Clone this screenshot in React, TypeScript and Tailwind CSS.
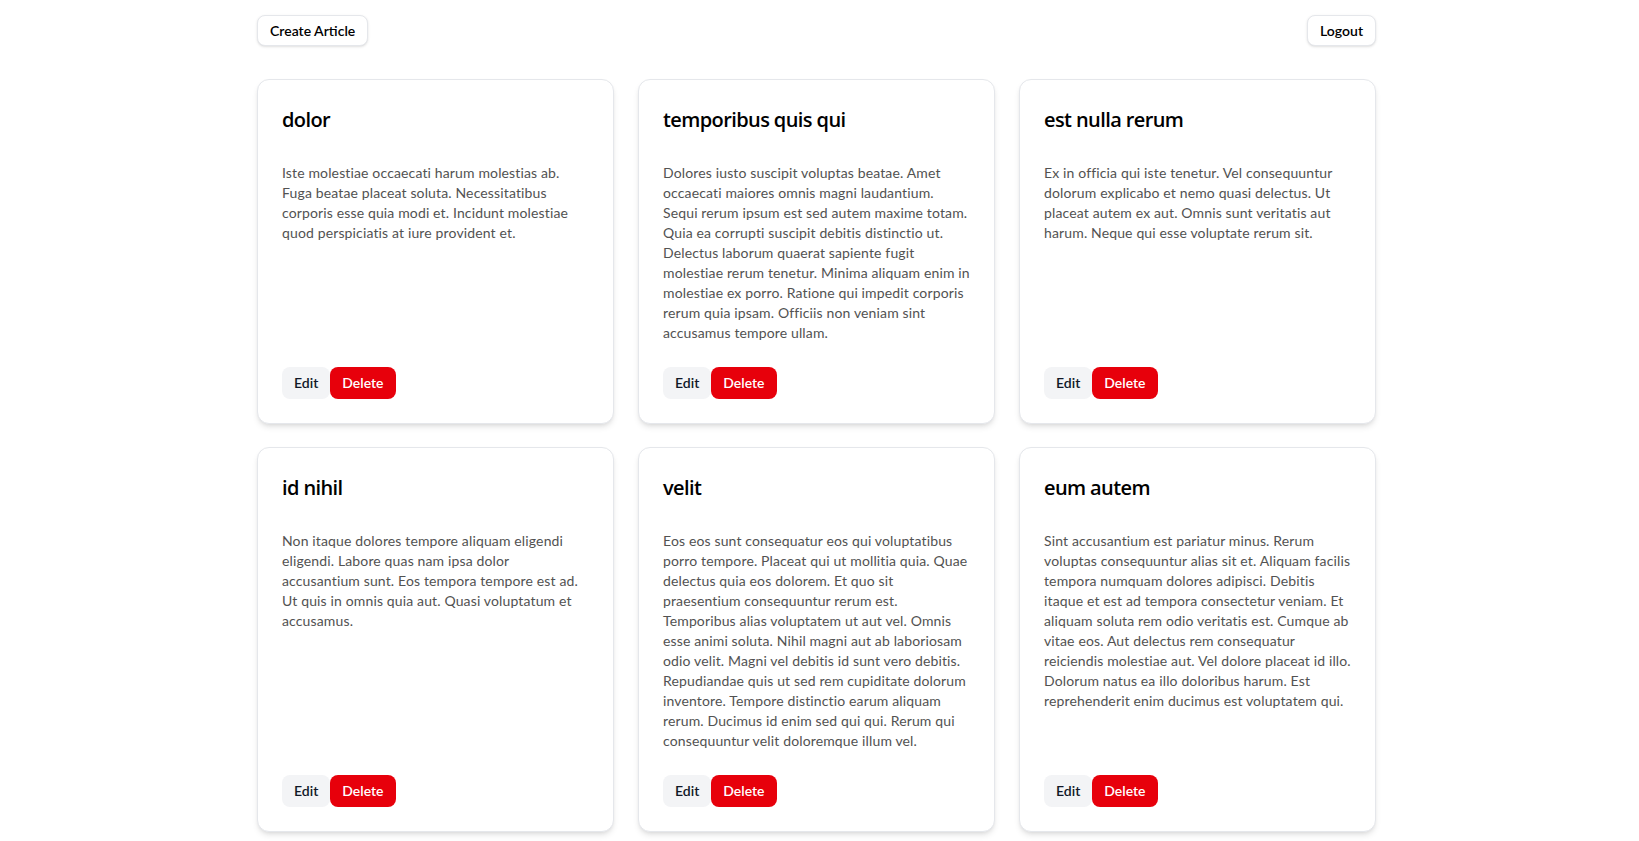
const articles = [
  {
    title: "dolor",
    body: "Iste molestiae occaecati harum molestias ab. Fuga beatae placeat soluta. Necessitatibus corporis esse quia modi et. Incidunt molestiae quod perspiciatis at iure provident et.",
  },
  {
    title: "temporibus quis qui",
    body: "Dolores iusto suscipit voluptas beatae. Amet occaecati maiores omnis magni laudantium. Sequi rerum ipsum est sed autem maxime totam. Quia ea corrupti suscipit debitis distinctio ut. Delectus laborum quaerat sapiente fugit molestiae rerum tenetur. Minima aliquam enim in molestiae ex porro. Ratione qui impedit corporis rerum quia ipsam. Officiis non veniam sint accusamus tempore ullam.",
  },
  {
    title: "est nulla rerum",
    body: "Ex in officia qui iste tenetur. Vel consequuntur dolorum explicabo et nemo quasi delectus. Ut placeat autem ex aut. Omnis sunt veritatis aut harum. Neque qui esse voluptate rerum sit.",
  },
  {
    title: "id nihil",
    body: "Non itaque dolores tempore aliquam eligendi eligendi. Labore quas nam ipsa dolor accusantium sunt. Eos tempora tempore est ad. Ut quis in omnis quia aut. Quasi voluptatum et accusamus.",
  },
  {
    title: "velit",
    body: "Eos eos sunt consequatur eos qui voluptatibus porro tempore. Placeat qui ut mollitia quia. Quae delectus quia eos dolorem. Et quo sit praesentium consequuntur rerum est. Temporibus alias voluptatem ut aut vel. Omnis esse animi soluta. Nihil magni aut ab laboriosam odio velit. Magni vel debitis id sunt vero debitis. Repudiandae quis ut sed rem cupiditate dolorum inventore. Tempore distinctio earum aliquam rerum. Ducimus id enim sed qui qui. Rerum qui consequuntur velit doloremque illum vel.",
  },
  {
    title: "eum autem",
    body: "Sint accusantium est pariatur minus. Rerum voluptas consequuntur alias sit et. Aliquam facilis tempora numquam dolores adipisci. Debitis itaque et est ad tempora consectetur veniam. Et aliquam soluta rem odio veritatis est. Cumque ab vitae eos. Aut delectus rem consequatur reiciendis molestiae aut. Vel dolore placeat id illo. Dolorum natus ea illo doloribus harum. Est reprehenderit enim ducimus est voluptatem qui.",
  },
];

const ArticleCard = ({ title, body }: { title: string; body: string }) => {
  return (
    <div className="flex flex-col rounded-xl border border-gray-200 bg-white px-6 pt-[26px] pb-6 shadow-md">
      <h2 className="mb-[29px] font-['Open_Sans',sans-serif] text-xl leading-7 font-semibold tracking-[-0.03em] text-black">
        {title}
      </h2>
      <p className="flex-1 text-sm leading-5 tracking-[0.14px] text-neutral-600">{body}</p>
      <div className="mt-6 flex">
        <button className="h-8 rounded-lg bg-gray-100 px-3 text-sm font-semibold text-gray-900">
          Edit
        </button>
        <button className="h-8 rounded-lg bg-red-600 px-3 text-sm font-semibold text-white">
          Delete
        </button>
      </div>
    </div>
  );
};

export default function App() {
  return (
    <div className="min-h-screen bg-white font-['Segoe_UI','Lato',sans-serif]">
      <div className="ml-[257px] w-[1119px] pt-[15px]">
        <div className="flex items-center justify-between">
          <button className="h-[31px] rounded-lg border border-gray-200 bg-white px-3 text-sm font-semibold text-black shadow-sm">
            Create Article
          </button>
          <button className="h-[31px] rounded-lg border border-gray-200 bg-white px-3 text-sm font-semibold text-black shadow-sm">
            Logout
          </button>
        </div>
        <div className="mt-[33px] grid grid-cols-3 gap-x-6 gap-y-[23px] pb-10">
          {articles.map((a) => (
            <ArticleCard key={a.title} title={a.title} body={a.body} />
          ))}
        </div>
      </div>
    </div>
  );
}
